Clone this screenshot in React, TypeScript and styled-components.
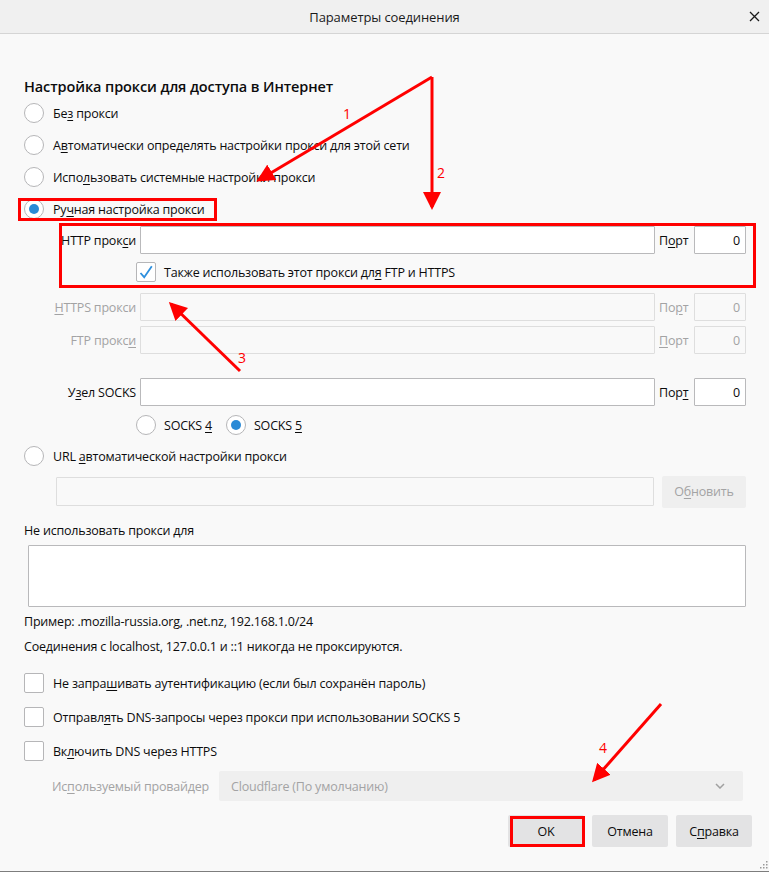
import React from "react";
import styled, { createGlobalStyle } from "styled-components";

const GlobalStyle = createGlobalStyle`
  html, body {
    margin: 0;
    padding: 0;
    background: #f9f9f9;
  }
  body {
    font-family: "Open Sans", "Noto Sans", "DejaVu Sans", sans-serif;
    font-size: 12.5px;
    letter-spacing: -0.2px;
    color: #0c0c0d;
  }
  * {
    box-sizing: border-box;
  }
`;

const RED = "#ff0000";

interface IRadioProps {
  checked?: boolean;
}
const Radio: React.FC<IRadioProps> = ({ checked }) => (
  <RadioCircle>{checked && <RadioDot />}</RadioCircle>
);

const Checkbox: React.FC<{ checked?: boolean }> = ({ checked }) => (
  <CheckBox>
    {checked && (
      <svg width="16" height="16" viewBox="0 0 16 16">
        <path d="M2.5 9 L6.2 13.2 L13.8 2.2" fill="none" stroke="#2e8fdd" strokeWidth="1.8" />
      </svg>
    )}
  </CheckBox>
);

interface IProxyRowProps {
  label: React.ReactNode;
  portLabel: React.ReactNode;
  disabled?: boolean;
}
const ProxyRow: React.FC<IProxyRowProps> = ({ label, portLabel, disabled }) => (
  <ProxyGrid>
    <FieldLabel disabled={disabled}>{label}</FieldLabel>
    <TextInput disabled={disabled} />
    <PortLabel disabled={disabled}>{portLabel}</PortLabel>
    <PortInput disabled={disabled}>0</PortInput>
  </ProxyGrid>
);

const Annotations: React.FC = () => (
  <Overlay width="769" height="872" viewBox="0 0 769 872">
    <defs>
      <marker id="head" markerWidth="6" markerHeight="6" refX="5" refY="3" orient="auto" markerUnits="strokeWidth">
        <path d="M0 0 L6 3 L0 6 Z" fill={RED} />
      </marker>
    </defs>
    <g fill="none" stroke={RED} strokeWidth="3">
      <rect x="19.5" y="199.5" width="196" height="20" />
      <rect x="60.5" y="224.5" width="694" height="62" />
      <rect x="511.5" y="817.5" width="72" height="28" />
      <line x1="432" y1="77" x2="259" y2="180" markerEnd="url(#head)" />
      <line x1="432" y1="77" x2="432" y2="207" markerEnd="url(#head)" />
      <line x1="240" y1="371" x2="171" y2="304" markerEnd="url(#head)" />
      <line x1="661" y1="704" x2="594" y2="780" markerEnd="url(#head)" />
    </g>
    <g fill={RED} fontFamily="Open Sans, sans-serif" fontSize="14">
      <text x="343" y="119">1</text>
      <text x="437" y="178">2</text>
      <text x="238" y="363">3</text>
      <text x="599" y="753">4</text>
    </g>
  </Overlay>
);

const App: React.FC = () => {
  return (
    <Window>
      <GlobalStyle />
      <TitleBar>
        <span />
        <Title>Параметры соединения</Title>
        <CloseButton>
          <svg width="11" height="11" viewBox="0 0 11 11">
            <path d="M1 1 L10 10 M10 1 L1 10" stroke="#1a1a1a" strokeWidth="1.3" />
          </svg>
        </CloseButton>
      </TitleBar>

      <Content>
        <Heading>Настройка прокси для доступа в Интернет</Heading>

        <OptionRow>
          <Radio />
          <span>
            Бе<U>з</U> прокси
          </span>
        </OptionRow>
        <OptionRow>
          <Radio />
          <span>
            А<U>в</U>томатически определять настройки прокси для этой сети
          </span>
        </OptionRow>
        <OptionRow>
          <Radio />
          <span>
            Испо<U>л</U>ьзовать системные настройки прокси
          </span>
        </OptionRow>
        <OptionRow>
          <Radio checked />
          <span>
            Ру<U>ч</U>ная настройка прокси
          </span>
        </OptionRow>

        <HttpRow>
          <ProxyRow
            label={
              <>
                HTTP прок<U>с</U>и
              </>
            }
            portLabel={
              <>
                П<U>о</U>рт
              </>
            }
          />
        </HttpRow>
        <ShareRow>
          <Checkbox checked />
          <span>
            Также использовать этот прокси дл<U>я</U> FTP и HTTPS
          </span>
        </ShareRow>
        <SpacedRow gap={5}>
          <ProxyRow
            disabled
            label={
              <>
                <U>H</U>TTPS прокси
              </>
            }
            portLabel={
              <>
                По<U>р</U>т
              </>
            }
          />
        </SpacedRow>
        <SpacedRow gap={5}>
          <ProxyRow
            disabled
            label={
              <>
                FTP прокс<U>и</U>
              </>
            }
            portLabel={
              <>
                <U>П</U>орт
              </>
            }
          />
        </SpacedRow>
        <SpacedRow gap={24}>
          <ProxyRow
            label={
              <>
                У<U>з</U>ел SOCKS
              </>
            }
            portLabel={
              <>
                Пор<U>т</U>
              </>
            }
          />
        </SpacedRow>

        <SocksRow>
          <SocksItem>
            <Radio />
            <span>
              SOCKS <U>4</U>
            </span>
          </SocksItem>
          <SocksItem>
            <Radio checked />
            <span>
              SOCKS <U>5</U>
            </span>
          </SocksItem>
        </SocksRow>

        <UrlRadioRow>
          <Radio />
          <span>
            URL <U>а</U>втоматической настройки прокси
          </span>
        </UrlRadioRow>
        <UrlRow>
          <TextInput disabled />
          <Button disabled width={84}>
            О<U>б</U>новить
          </Button>
        </UrlRow>

        <TextLine top={14}>Не использовать прокси для</TextLine>
        <TextArea />
        <TextLine top={5}>Пример: .mozilla-russia.org, .net.nz, 192.168.1.0/24</TextLine>
        <TextLine top={5}>Соединения с localhost, 127.0.0.1 и ::1 никогда не проксируются.</TextLine>

        <CheckList>
          <CheckRow>
            <Checkbox />
            <span>
              Не запра<U>ш</U>ивать аутентификацию (если был сохранён пароль)
            </span>
          </CheckRow>
          <CheckRow>
            <Checkbox />
            <span>
              Отправл<U>я</U>ть DNS-запросы через прокси при использовании SOCKS 5
            </span>
          </CheckRow>
          <CheckRow>
            <Checkbox />
            <span>
              Вк<U>л</U>ючить DNS через HTTPS
            </span>
          </CheckRow>
        </CheckList>

        <ProviderRow>
          <ProviderLabel>
            Ис<U>п</U>ользуемый провайдер
          </ProviderLabel>
          <Select>
            <span>Cloudflare (По умолчанию)</span>
            <svg width="10" height="6" viewBox="0 0 10 6">
              <path d="M1 1 L5 5 L9 1" fill="none" stroke="#a0a0a0" strokeWidth="1.5" />
            </svg>
          </Select>
        </ProviderRow>

        <ButtonRow>
          <Button>OK</Button>
          <Button>Отмена</Button>
          <Button>
            С<U>п</U>равка
          </Button>
        </ButtonRow>
      </Content>

      <Grip width="8" height="8" viewBox="0 0 8 8">
        <g fill="#9a9a9a">
          <rect x="6" y="0" width="1.5" height="1.5" />
          <rect x="3" y="3" width="1.5" height="1.5" />
          <rect x="6" y="3" width="1.5" height="1.5" />
          <rect x="0" y="6" width="1.5" height="1.5" />
          <rect x="3" y="6" width="1.5" height="1.5" />
          <rect x="6" y="6" width="1.5" height="1.5" />
        </g>
      </Grip>
      <Annotations />
    </Window>
  );
};

const Window = styled.div`
  position: relative;
  width: 769px;
  height: 872px;
  background: #f9f9f9;
  border-bottom: 1px solid #7d7d7d;
  display: flex;
  flex-direction: column;
  overflow: hidden;
`;

const TitleBar = styled.div`
  flex: none;
  height: 34px;
  background: #f0f0f0;
  border-bottom: 1px solid #d5d5d5;
  display: grid;
  grid-template-columns: 1fr auto 1fr;
  align-items: center;
`;

const Title = styled.div`
  font-size: 13px;
  letter-spacing: -0.1px;
  color: #1a1a1a;
`;

const CloseButton = styled.div`
  justify-self: end;
  margin-right: 7px;
  display: flex;
  align-items: center;
  justify-content: center;
  width: 16px;
  height: 16px;
`;

const Content = styled.div`
  flex: 1;
  display: flex;
  flex-direction: column;
  padding: 0 23px 0 24px;
`;

const Heading = styled.div`
  margin-top: 43px;
  height: 20px;
  line-height: 20px;
  font-size: 14.5px;
  letter-spacing: -0.1px;
  font-weight: 600;
`;

const U = styled.u`
  text-decoration: underline;
  text-underline-offset: 2px;
`;

const RadioCircle = styled.span`
  flex: none;
  width: 20px;
  height: 20px;
  border-radius: 50%;
  border: 1px solid #b6b6b8;
  background: #fff;
  display: flex;
  align-items: center;
  justify-content: center;
`;

const RadioDot = styled.span`
  width: 10px;
  height: 10px;
  border-radius: 50%;
  background: #2a8ad6;
`;

const CheckBox = styled.span`
  flex: none;
  width: 20px;
  height: 20px;
  border-radius: 2px;
  border: 1px solid #b6b6b8;
  background: #fff;
  display: flex;
  align-items: center;
  justify-content: center;
`;

const OptionRow = styled.div`
  height: 32px;
  display: flex;
  align-items: center;
  gap: 9px;
`;

const ProxyGrid = styled.div`
  display: grid;
  grid-template-columns: 112px 1fr 31px 52px;
  column-gap: 4px;
  align-items: center;
  height: 28px;
`;

const FieldLabel = styled.div<{ disabled?: boolean }>`
  justify-self: end;
  white-space: nowrap;
  color: ${p => (p.disabled ? "#a3a3a4" : "#0c0c0d")};
`;

const PortLabel = styled.div<{ disabled?: boolean }>`
  white-space: nowrap;
  color: ${p => (p.disabled ? "#a3a3a4" : "#0c0c0d")};
`;

const TextInput = styled.div<{ disabled?: boolean }>`
  flex: 1;
  height: 28px;
  background: ${p => (p.disabled ? "#f9f9f9" : "#fff")};
  border: 1px solid ${p => (p.disabled ? "#dedede" : "#b9b9bb")};
  border-radius: 1px;
`;

const PortInput = styled.div<{ disabled?: boolean }>`
  height: 28px;
  display: flex;
  align-items: center;
  justify-content: flex-end;
  padding-right: 5px;
  background: ${p => (p.disabled ? "#f9f9f9" : "#fff")};
  border: 1px solid ${p => (p.disabled ? "#dedede" : "#b9b9bb")};
  color: ${p => (p.disabled ? "#a3a3a4" : "#0c0c0d")};
  border-radius: 1px;
`;

const HttpRow = styled.div`
  margin-top: 1px;
`;

const SpacedRow = styled.div<{ gap: number }>`
  margin-top: ${p => p.gap}px;
`;

const ShareRow = styled.div`
  margin-top: 2px;
  height: 32px;
  padding-left: 112px;
  display: flex;
  align-items: center;
  gap: 8px;
`;

const SocksRow = styled.div`
  margin-top: 4px;
  height: 30px;
  padding-left: 112px;
  display: flex;
  align-items: center;
  gap: 14px;
`;

const SocksItem = styled.div`
  display: flex;
  align-items: center;
  gap: 8px;
`;

const UrlRadioRow = styled(OptionRow)`
  margin-top: 1px;
  height: 30px;
`;

const UrlRow = styled.div`
  margin-top: 5px;
  height: 31px;
  padding-left: 32px;
  display: flex;
  align-items: center;
  gap: 8px;

  ${TextInput} {
    height: 29px;
  }
`;

const Button = styled.div<{ disabled?: boolean; width?: number }>`
  flex: none;
  width: ${p => p.width ?? 76}px;
  height: 32px;
  display: flex;
  align-items: center;
  justify-content: center;
  border-radius: 2px;
  background: ${p => (p.disabled ? "#efefef" : "#e3e3e4")};
  color: ${p => (p.disabled ? "#a3a3a4" : "#0c0c0d")};
`;

const TextLine = styled.div<{ top: number }>`
  margin-top: ${p => p.top}px;
  height: 20px;
  line-height: 20px;
  white-space: nowrap;
`;

const TextArea = styled.div`
  margin-top: 4px;
  margin-left: 4px;
  height: 62px;
  background: #fff;
  border: 1px solid #b9b9bb;
  border-radius: 1px;
`;

const CheckList = styled.div`
  margin-top: 9px;
  display: flex;
  flex-direction: column;
`;

const CheckRow = styled.div`
  height: 34px;
  display: flex;
  align-items: center;
  gap: 9px;
`;

const ProviderRow = styled.div`
  margin-top: 3px;
  height: 30px;
  padding-left: 28px;
  display: flex;
  align-items: center;
`;

const ProviderLabel = styled.div`
  color: #a3a3a4;
  white-space: nowrap;
`;

const Select = styled.div`
  margin-left: auto;
  margin-right: 3px;
  width: 524px;
  height: 30px;
  border-radius: 2px;
  background: #efefef;
  color: #a3a3a4;
  display: flex;
  align-items: center;
  justify-content: space-between;
  padding: 0 18px 0 12px;
`;

const ButtonRow = styled.div`
  margin-top: 14px;
  margin-right: -6px;
  display: flex;
  justify-content: flex-end;
  gap: 8px;
`;

const Grip = styled.svg`
  position: absolute;
  right: 1px;
  bottom: 2px;
`;

const Overlay = styled.svg`
  position: absolute;
  left: 0;
  top: 0;
  pointer-events: none;
`;

export default App;
